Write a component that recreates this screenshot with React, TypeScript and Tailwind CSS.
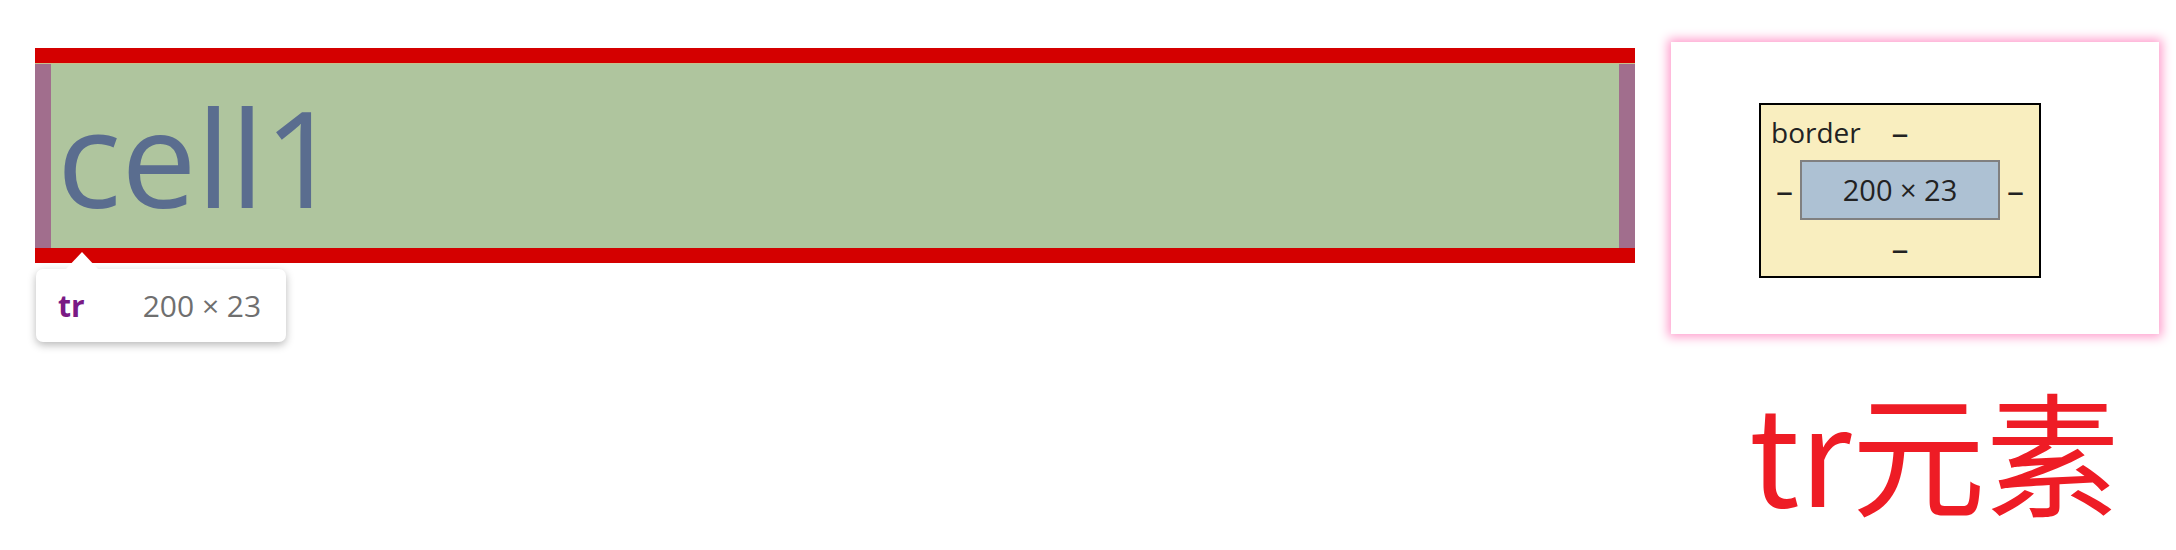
export default function App() {
  return (
    <div className="w-[2176px] h-[550px] bg-white flex items-start overflow-hidden font-['Open_Sans',sans-serif]">
      <div className="ml-[35px] mt-[48px] flex flex-col">
        <div className="w-[1600px] flex flex-col">
          <div className="h-[15px] bg-[#d40000]" />
          <div className="h-[1px] bg-[#c8c08c]" />
          <div className="h-[184px] flex bg-[#afc59e]">
            <div className="w-[16px] bg-[#a16e8d]" />
            <div className="flex-1 flex items-center pl-[6px] text-[134px] leading-none text-[#5a6d8f]">
              cell1
            </div>
            <div className="w-[16px] bg-[#a16e8d]" />
          </div>
          <div className="h-[15px] bg-[#d40000]" />
        </div>
        <div className="relative mt-[6px] ml-[1px] w-[250px] h-[73px] bg-white rounded-[7px] shadow-[0_3px_9px_rgba(0,0,0,0.28)] flex items-center pl-[22px] text-[30px]">
          <div className="absolute left-[30px] top-[-17px] w-0 h-0 border-l-[16px] border-r-[16px] border-b-[17px] border-l-transparent border-r-transparent border-b-white" />
          <span className="font-bold text-[#7a1a85]">tr</span>
          <span className="ml-[58px] text-[#6f6f6f]">200 × 23</span>
        </div>
      </div>
      <div className="ml-[36px] mt-[42px] flex flex-col">
        <div className="w-[488px] h-[292px] bg-white shadow-[0_0_10px_3px_#ff9ccc] pl-[88px] pt-[61px]">
          <div className="w-[282px] h-[175px] border-2 border-black bg-[#f9eebf] flex flex-col text-[28px] text-[#222]">
            <div className="h-[55px] grid grid-cols-[1fr_auto_1fr] leading-[55px]">
              <span className="pl-[10px]">border</span>
              <span className="text-[34px]">–</span>
              <span />
            </div>
            <div className="h-[60px] flex justify-center items-center gap-[7px] leading-[60px]">
              <span className="text-[34px]">–</span>
              <div className="w-[200px] h-[60px] border-2 border-[#808080] bg-[#adc1d3] text-center leading-[56px] text-[29px]">
                200 × 23
              </div>
              <span className="text-[34px]">–</span>
            </div>
            <div className="h-[56px] leading-[56px] text-center text-[34px]">–</div>
          </div>
        </div>
        <div className="mt-[48px] pl-[78px] text-[134px] leading-none text-[#ee1c25] font-['Noto_Sans_CJK_SC',sans-serif]">
          tr元素
        </div>
      </div>
    </div>
  );
}
